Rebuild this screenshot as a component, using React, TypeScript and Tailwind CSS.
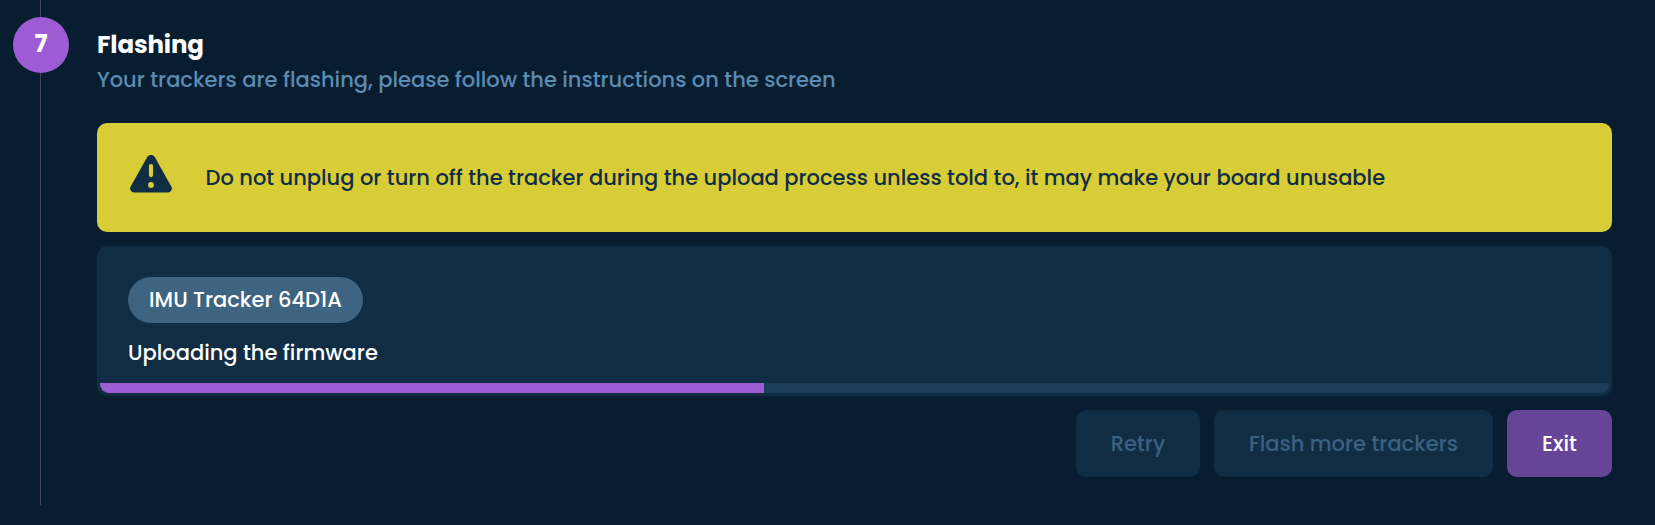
const steps = { number: 7, progress: 44 };

function WarningIcon() {
  return (
    <svg className="block h-[38px] w-[42px]" viewBox="0 0 42 38" fill="none">
      <path
        d="M17.1 2.2a4.5 4.5 0 0 1 7.8 0L41.3 31.4c1.6 2.9-.3 6.2-3.6 6.2H4.3c-3.3 0-5.2-3.3-3.6-6.2L17.1 2.2Z"
        fill="#112d43"
      />
      <rect x="18.9" y="9" width="4.2" height="13.2" rx="2.1" fill="#d8cd37" />
      <circle cx="21" cy="30" r="2.9" fill="#d8cd37" />
    </svg>
  );
}

export default function App() {
  return (
    <div className="flex h-[525px] w-[1655px] overflow-hidden bg-[#081e30] pl-[13px] pr-[43px] font-['Poppins','Inter',sans-serif] text-[21px] font-medium leading-[30px] text-white">
      <div className="flex h-[505px] w-14 shrink-0 flex-col items-center">
        <div className="mr-px h-[17px] w-px bg-[#434659]" />
        <div className="flex size-14 shrink-0 items-center justify-center rounded-full bg-[#9d5cd4] pb-[3px] text-[24.5px] font-bold">
          {steps.number}
        </div>
        <div className="mr-px w-px grow bg-[#434659]" />
      </div>

      <div className="ml-7 flex min-w-0 grow flex-col">
        <h2 className="mt-[27px] h-9 whitespace-nowrap text-[24.5px] font-bold leading-9 tracking-[-0.12px]">Flashing</h2>
        <p className="mt-0.5 h-[30px] whitespace-nowrap text-[#5d8bb2]">
          Your trackers are flashing, please follow the instructions on the screen
        </p>

        <div className="mt-7 flex h-[109px] shrink-0 items-center rounded-[10px] bg-[#d8cd37] pl-[33px] text-[#112d43]">
          <div className="-mt-2">
            <WarningIcon />
          </div>
          <p className="ml-[33.5px] whitespace-nowrap">
            Do not unplug or turn off the tracker during the upload process unless told to, it may make your board unusable
          </p>
        </div>

        <div className="mt-3.5 flex h-[150px] shrink-0 flex-col rounded-[10px] bg-[#112d43] p-[3px]">
          <div className="flex h-[134px] flex-col items-start px-7 pt-7">
            <div className="flex h-[46px] w-[235px] items-center justify-center rounded-full bg-[#3f6482]">
              <span className="whitespace-nowrap">IMU Tracker 64D1A</span>
            </div>
            <p className="mt-[15px] whitespace-nowrap">Uploading the firmware</p>
          </div>
          <div className="h-2.5 overflow-hidden rounded-b-[9px] bg-[#1a3d59]">
            <div className="h-full bg-[#9d5cd4]" style={{ width: `${steps.progress}%` }} />
          </div>
        </div>

        <div className="mt-3.5 flex h-[67px] shrink-0 justify-end gap-3.5">
          <button disabled className="w-[124px] rounded-[10px] bg-[#112d43] text-[#3a6182]">Retry</button>
          <button disabled className="w-[279px] rounded-[10px] bg-[#112d43] text-[#3a6182]">Flash more trackers</button>
          <button className="w-[105px] rounded-[10px] bg-[#664599]">Exit</button>
        </div>
      </div>
    </div>
  );
}
